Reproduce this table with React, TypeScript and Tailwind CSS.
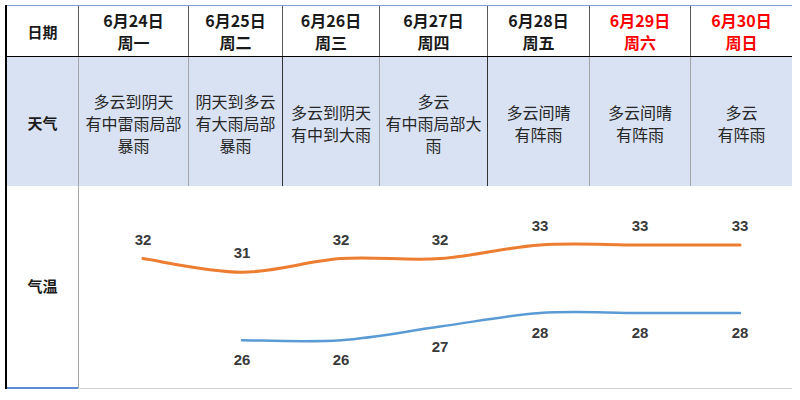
import React from "react";

const days = [
  { date: "6月24日", week: "周一", w: "w-[110px]", red: false, weather: ["多云到阴天", "有中雷雨局部", "暴雨"] },
  { date: "6月25日", week: "周二", w: "w-[94px]", red: false, weather: ["阴天到多云", "有大雨局部", "暴雨"] },
  { date: "6月26日", week: "周三", w: "w-[97px]", red: false, weather: ["多云到阴天", "有中到大雨"] },
  { date: "6月27日", week: "周四", w: "w-[108px]", red: false, weather: ["多云", "有中雨局部大", "雨"] },
  { date: "6月28日", week: "周五", w: "w-[102px]", red: false, weather: ["多云间晴", "有阵雨"] },
  { date: "6月29日", week: "周六", w: "w-[101px]", red: true, weather: ["多云间晴", "有阵雨"] },
  { date: "6月30日", week: "周日", w: "w-[102px]", red: true, weather: ["多云", "有阵雨"] },
];

const xs = [64, 163, 262, 361, 461, 561, 661];
const high = [32, 31, 32, 32, 33, 33, 33];
const low: (number | null)[] = [null, 26, 26, 27, 28, 28, 28];

const ty = (t: number) => 59 + (33 - t) * 13.6;

function smoothPath(pts: [number, number][]) {
  let d = `M ${pts[0][0]} ${pts[0][1]}`;
  for (let i = 0; i < pts.length - 1; i++) {
    const p0 = pts[i - 1] || pts[i];
    const p1 = pts[i];
    const p2 = pts[i + 1];
    const p3 = pts[i + 2] || p2;
    const c1x = p1[0] + (p2[0] - p0[0]) / 6;
    const c1y = p1[1] + (p2[1] - p0[1]) / 6;
    const c2x = p2[0] - (p3[0] - p1[0]) / 6;
    const c2y = p2[1] - (p3[1] - p1[1]) / 6;
    d += ` C ${c1x} ${c1y}, ${c2x} ${c2y}, ${p2[0]} ${p2[1]}`;
  }
  return d;
}

function Label({ x, y, t }: { x: number; y: number; t: number }) {
  return (
    <text
      x={x}
      y={y}
      textAnchor="middle"
      dominantBaseline="middle"
      fontFamily="'Liberation Sans', Arial, sans-serif"
      fontWeight="bold"
      fontSize="15"
      fill="#3a3a3a"
    >
      {t}
    </text>
  );
}

function TempChart() {
  const hiPts = high.map((t, i) => [xs[i], ty(t)] as [number, number]);
  const loPts: [number, number][] = [];
  low.forEach((t, i) => {
    if (t !== null) loPts.push([xs[i], ty(t)]);
  });

  return (
    <svg width="713" height="202" viewBox="0 0 713 202" className="block">
      <path d={smoothPath(hiPts)} fill="none" stroke="#ed7d31" strokeWidth="3" strokeLinecap="round" />
      <path d={smoothPath(loPts)} fill="none" stroke="#5b9bd5" strokeWidth="2.5" strokeLinecap="round" />
      {high.map((t, i) => (
        <Label key={"h" + i} x={xs[i]} y={ty(t) - 18} t={t} />
      ))}
      {low.map((t, i) => (t === null ? null : <Label key={"l" + i} x={xs[i]} y={ty(t) + 21} t={t} />))}
    </svg>
  );
}

export default function App() {
  return (
    <div
      className="w-[800px] h-[400px] bg-white pl-[5px] pt-[5px] overflow-hidden"
      style={{ fontFamily: "'Noto Sans CJK SC', 'Noto Sans', sans-serif" }}
    >
      <div className="w-[787px] border-l-2 border-black">
        {/* header */}
        <div className="flex h-[52px] border-t border-t-[#7f9fd4] border-b border-b-black">
          <div className="w-[71px] shrink-0 flex items-center justify-center pt-[3px] text-[15px] font-bold text-[#1a1a1a]">
            日期
          </div>
          {days.map((d) => (
            <div
              key={d.date}
              className={`${d.w} shrink-0 border-l border-[#5a5a5a] flex flex-col items-center justify-center text-[16px] font-bold leading-[22px] ${
                d.red ? "text-[#ff0000]" : "text-[#1a1a1a]"
              }`}
            >
              <div>{d.date}</div>
              <div>{d.week}</div>
            </div>
          ))}
          <div className="w-px bg-[#8a8a8a]" />
        </div>

        {/* weather */}
        <div className="flex h-[129px] bg-[#d9e2f3]">
          <div className="w-[71px] shrink-0 flex items-center justify-center pt-[4px] text-[15px] font-bold text-[#1a1a1a]">
            天气
          </div>
          {days.map((d, i) => (
            <div
              key={d.date}
              className={`${d.w} shrink-0 border-l ${
                i === 2 || i === 4 ? "border-[#333333]" : "border-[#a6a6a6]"
              } flex flex-col items-center justify-center pt-[3px] text-[16px] leading-[22px] text-[#262626]`}
            >
              {d.weather.map((l) => (
                <div key={l} className="whitespace-nowrap">
                  {l}
                </div>
              ))}
            </div>
          ))}
          <div className="w-px bg-[#8a8a8a]" />
        </div>

        {/* temperature */}
        <div className="flex h-[203px] border-b border-b-[#d0d0d0]">
          <div className="w-[71px] shrink-0 flex items-center justify-center text-[15px] font-bold text-[#1a1a1a] border-b-2 border-b-[#5b8bd5] -mb-px">
            气温
          </div>
          <div className="w-[714px] shrink-0 border-l border-[#a6a6a6]">
            <TempChart />
          </div>
          <div className="w-px bg-[#d8d8d8]" />
        </div>
      </div>
    </div>
  );
}
